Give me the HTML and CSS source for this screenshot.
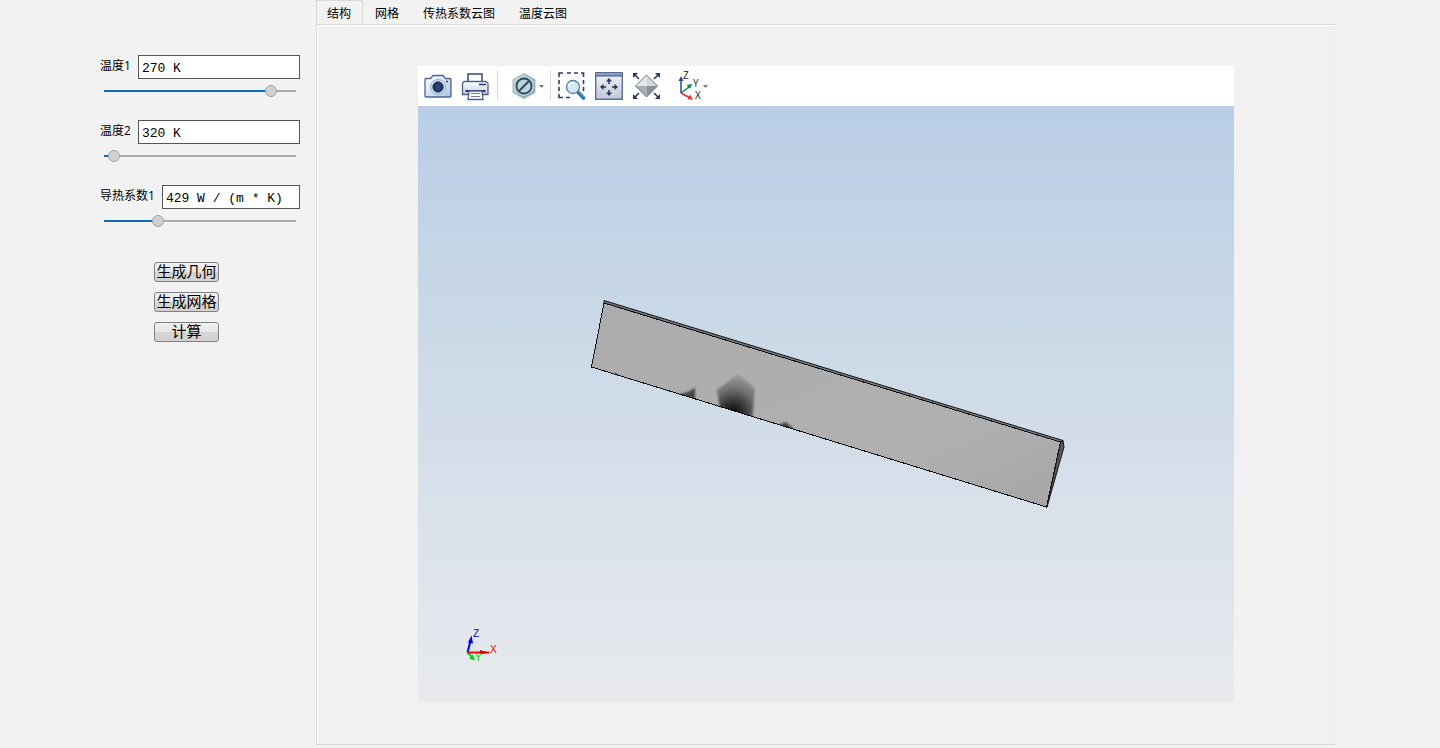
FILE: index.html
```html
<!DOCTYPE html>
<html lang="zh-CN">
<head>
<meta charset="utf-8">
<title>结构</title>
<link rel="stylesheet" href="styles.css">
</head>
<body>
<div class="app">
  <aside class="sidebar">
    <div class="param">
      <div class="param-row"><label for="t1">温度1</label><input class="field" id="t1" type="text" value="270 K"></div>
      <input class="slider" type="range" aria-label="温度1" min="0" max="180" value="161" style="--fill:87%">
    </div>
    <div class="param">
      <div class="param-row"><label for="t2">温度2</label><input class="field" id="t2" type="text" value="320 K"></div>
      <input class="slider" type="range" aria-label="温度2" min="0" max="180" value="4" style="--fill:5%">
    </div>
    <div class="param">
      <div class="param-row"><label for="k1">导热系数1</label><input class="field" id="k1" type="text" value="429 W / (m * K)"></div>
      <input class="slider" type="range" aria-label="导热系数1" min="0" max="180" value="48" style="--fill:28%">
    </div>
    <div class="actions">
      <button class="action" type="button">生成几何</button>
      <button class="action" type="button">生成网格</button>
      <button class="action" type="button">计算</button>
    </div>
  </aside>

  <main class="main">
    <div class="tabs" role="tablist">
      <button class="tab tab-active" type="button" role="tab" aria-selected="true">结构</button>
      <button class="tab" type="button" role="tab" aria-selected="false">网格</button>
      <button class="tab" type="button" role="tab" aria-selected="false">传热系数云图</button>
      <button class="tab" type="button" role="tab" aria-selected="false">温度云图</button>
    </div>
    <section class="panel">
      <div class="viewer">
        <div class="toolbar">
          <button class="tool" type="button" aria-label="截图">
            <svg width="29" height="30" viewBox="0 0 29 30">
              <defs><linearGradient id="cam" x1="0" y1="0" x2="1" y2="1"><stop offset="0" stop-color="#fff"/><stop offset="1" stop-color="#a9c6e4"/></linearGradient>
              <radialGradient id="lens"><stop offset="0" stop-color="#375180"/><stop offset="1" stop-color="#152a5c"/></radialGradient></defs>
              <path d="M1.500 7.500h5l2.500-3h10l2.500 3H26q1 0 1 1V25q0 1-1 1H2q-1 0-1-1V8.500z" fill="url(#cam)" stroke="#4a6494" stroke-width="1.300"/>
              <circle cx="14" cy="16" r="7.500" fill="#d3e0ef" stroke="#8aa1c0" stroke-width=".8"/>
              <circle cx="14" cy="16" r="5.200" fill="url(#lens)" stroke="#25406f"/>
              <circle cx="23" cy="10.500" r="1" fill="#263c6b"/>
            </svg>
          </button>
          <button class="tool" type="button" aria-label="打印">
            <svg width="29" height="30" viewBox="0 0 29 30">
              <defs><linearGradient id="prn" x1="0" y1="0" x2="0" y2="1"><stop offset="0" stop-color="#fff"/><stop offset="1" stop-color="#c3ccdc"/></linearGradient></defs>
              <path d="M7 11V3h14v8" fill="#fff" stroke="#344a77" stroke-width="1.500"/>
              <path d="M3 10.500h22l2 2V23.500H1.500V12.500z" fill="url(#prn)" stroke="#4d618a" stroke-width="1.300"/>
              <path d="M18 13.500h7" stroke="#24375f" stroke-width="1.500"/>
              <path d="M4.500 20h20" stroke="#24375f" stroke-width="2"/>
              <path d="M8 20h13l1 8.500H7z" fill="#fff" stroke="#4d618a" stroke-width="1.300"/>
              <path d="M10 22.500h9M10 25.500h9" stroke="#758198"/>
            </svg>
          </button>
          <span class="separator"></span>
          <button class="tool tool-hex" type="button" aria-label="渲染选项">
            <svg width="35" height="30" viewBox="0 0 35 30">
              <defs><linearGradient id="hex" x1="0" y1="0" x2="1" y2="1"><stop offset="0" stop-color="#c4dedd"/><stop offset="1" stop-color="#7796a2"/></linearGradient></defs>
              <path d="M12 2.500l11 6v13l-11 6-11-6v-13z" fill="url(#hex)" stroke="#a3b9bf"/>
              <path d="M12 5l9 5v10l-9 5-9-5V10z" fill="#a3c1c6" stroke="#d4e4e5" stroke-width=".8"/>
              <circle cx="12" cy="15" r="7.500" fill="#bdd4dc" stroke="#2b4a61" stroke-width="1.800"/>
              <path d="M7 20L17.300 9.700" stroke="#2b4a61" stroke-width="2"/>
              <path d="M27 14h5l-2.500 3z" fill="#777"/>
            </svg>
          </button>
          <span class="separator"></span>
          <button class="tool" type="button" aria-label="框选缩放">
            <svg width="29" height="30" viewBox="0 0 29 30">
              <path d="M1 6V2h4M9 2h4M16 2h4M23 2h2.500v4M25.500 9v4M25.500 16v4M1 9v4M1 16v4M1 23v3.500h4M8 26.500h4" fill="none" stroke="#2b3d6c" stroke-width="1.600"/>
              <path d="M19 20l6.500 7" stroke="#1f6fae" stroke-width="3.500" stroke-linecap="round"/>
              <path d="M19.500 19.500l6 6.500" stroke="#68b4df" stroke-width="1"/>
              <circle cx="15" cy="16" r="6.500" fill="#d3e7f6" stroke="#557e9f" stroke-width="1.300"/>
              <path d="M11 15q1.500-4 5-3.500" fill="none" stroke="#fff" stroke-width="1.500"/>
            </svg>
          </button>
          <button class="tool" type="button" aria-label="适合窗口">
            <svg width="29" height="30" viewBox="0 0 29 30">
              <defs><linearGradient id="fit" x1="0" y1="0" x2="0" y2="1"><stop offset="0" stop-color="#f1f4f9"/><stop offset="1" stop-color="#bfc8d8"/></linearGradient></defs>
              <path d="M.7 1.700h26.600v26.600H.7z" fill="url(#fit)" stroke="#5b6e94" stroke-width="1.400"/>
              <path d="M1 2h26v3H1z" fill="#8a9dbf"/><path d="M0 5h28" stroke="#3f5582"/>
              <path d="M14 9v4M14 19v4M7 16h4M17 16h4" stroke="#22345f" stroke-width="1.500"/>
              <path d="M14 7l3 3.500h-6zM14 25l3-3.500h-6zM5 16l3.500-3v6zM23 16l-3.500-3v6z" fill="#22345f"/>
            </svg>
          </button>
          <button class="tool" type="button" aria-label="全部显示">
            <svg width="29" height="30" viewBox="0 0 29 30">
              <path d="M14.500 4v11h-11z" fill="#e5e7ea"/><path d="M14.500 4v11h11z" fill="#d3d6da"/><path d="M3.500 15h11v11z" fill="#a8aeb6"/><path d="M14.500 15h11l-11 11z" fill="#878f99"/>
              <path d="M14.500 4l11 11-11 11-11-11z" fill="none" stroke="#697587"/>
              <path d="M2 3l5 5M27 3l-5 5M2 27l5-5M27 27l-5-5" stroke="#263b68" stroke-width="1.600"/>
              <path d="M1 2h5L1 7zM28 2h-5l5 5zM1 28h5l-5-5zM28 28h-5l5-5z" fill="#263b68"/>
            </svg>
          </button>
          <button class="tool tool-axes" type="button" aria-label="视图方向">
            <svg width="32" height="30" viewBox="0 0 32 30">
              <path d="M3 22V8" stroke="#2649a0" stroke-width="1.500"/><path d="M.5 10L3 5l2.500 5z" fill="#2649a0"/>
              <path d="M3 22l8-6" stroke="#148446" stroke-width="1.500"/><path d="M14 13l-2 5-3.500-4z" fill="#148446"/>
              <path d="M3 22l9 5" stroke="#e83030" stroke-width="1.500"/><path d="M15 28.500h-5.500l2.500-5z" fill="#e83030"/>
              <text class="axis-label" x="5" y="8">Z</text><text class="axis-label" x="15" y="16">Y</text><text class="axis-label" x="17" y="28">X</text>
              <path d="M25 14h5l-2.500 3z" fill="#777"/>
            </svg>
          </button>
        </div>
        <svg class="scene" viewBox="0 0 816 596" role="img" aria-label="几何模型">
          <defs>
            <linearGradient id="face" x1="0" y1="0" x2="1" y2="1"><stop offset="0" stop-color="#acacac"/><stop offset=".7" stop-color="#b0b0b0"/><stop offset="1" stop-color="#a6a6a6"/></linearGradient>
            <radialGradient id="shade" gradientUnits="userSpaceOnUse" cx="315" cy="307" r="41"><stop offset="0" stop-color="#080808"/><stop offset=".25" stop-color="#303030"/><stop offset=".6" stop-color="#727272"/><stop offset="1" stop-color="#a6a6a6"/></radialGradient>
            <filter id="soft" x="-20%" y="-20%" width="140%" height="140%"><feGaussianBlur stdDeviation="1"/></filter>
            <clipPath id="plate"><path d="M186 196L643 335.500 628.500 401 173.500 261z"/></clipPath>
          </defs>
          <path d="M186 194.500L645 334.500 643 337 186 197z" fill="#777b80" stroke="#161616" stroke-width="1"/>
          <path d="M642.500 336L645 334.500 646 341 629 401z" fill="#55595c" stroke="#161616" stroke-width="1"/>
          <path d="M186 197L642.500 336 628.500 401 173.500 261z" fill="url(#face)"/>
          <g clip-path="url(#plate)">
            <path d="M320 268L299 284l3 20 11 8 21 4 3-34z" fill="url(#shade)" filter="url(#soft)"/>
            <path d="M277 282l-7 4-8 2 15 8z" fill="#444" filter="url(#soft)"/>
            <path d="M368 316l-8 3 20 8z" fill="#444" filter="url(#soft)"/>
            <path d="M197 266l7 6-7-1z" fill="#555"/>
          </g>
          <path d="M186 197L642.500 336 628.500 401 173.500 261z" fill="none" stroke="#111" stroke-width="1" shape-rendering="crispEdges"/>
          <path d="M49.500 546.500L53 533" stroke="#0000f0" stroke-width="2"/><path d="M50 536.500l3.500-7 1.500 8z" fill="#0000f0"/>
          <path d="M49.500 546.500l5 5" stroke="#00d800" stroke-width="2"/><path d="M57 554.500l-6-2 4-4z" fill="#00d800"/>
          <path d="M49.500 546.500H71" stroke="#f00000" stroke-width="2"/><path d="M62 544l8 2.500-8 2z" fill="#d00000"/>
          <text class="triad" x="55" y="531" fill="#0000f0">Z</text>
          <text class="triad" x="57" y="555" fill="#00d800">Y</text>
          <text class="triad" x="72" y="547" fill="#f00000">X</text>
        </svg>
      </div>
    </section>
  </main>
</div>
</body>
</html>
```
FILE: styles.css
```css
* {
  box-sizing: border-box;
}

body {
  margin: 0;
  background: #f2f2f2;
  color: #000;
  font-family: "Noto Sans CJK SC", sans-serif;
  font-size: 12px;
}

.app {
  display: grid;
  grid-template-columns: 316px 1fr 104px;
  min-height: 100vh;
}

.sidebar {
  padding: 55px 16px 0 100px;
}

.param {
  height: 65px;
}

.param-row {
  display: flex;
  align-items: flex-start;
  gap: 7px;
  height: 24px;
}

.param-row label {
  font-family: "Open Sans", "Noto Sans CJK SC", sans-serif;
  line-height: 22px;
  white-space: nowrap;
}

.field {
  flex: 1;
  min-width: 0;
  height: 24px;
  padding: 2px 3px 0;
  border: 1px solid #555459;
  border-radius: 0;
  background: #fff;
  color: #000;
  font-family: "Liberation Mono", monospace;
  font-size: 13px;
}

.slider {
  display: block;
  width: calc(100% - 8px);
  height: 12px;
  margin: 6px 4px 0;
  appearance: none;
  background: linear-gradient(to right, #0f6cbd var(--fill), #ababab var(--fill)) center / 100% 2px no-repeat;
}

.slider::-webkit-slider-thumb {
  width: 12px;
  height: 12px;
  appearance: none;
  border: 1px solid #a3a3a3;
  border-radius: 50%;
  background: #d1d1d1;
}

.actions {
  display: flex;
  flex-direction: column;
  align-items: center;
  gap: 10px;
  padding: 12px 27px 0 0;
}

.action {
  width: 65px;
  height: 20px;
  padding: 0 0 2px;
  border: 1px solid #808080;
  border-radius: 3px;
  background: linear-gradient(#f0f0f0, #e6e6e6 50%, #d5d5d5 50%, #d2d2d2);
  color: #000;
  font-family: "Noto Sans CJK SC", sans-serif;
  font-size: 15px;
  line-height: 16px;
  white-space: nowrap;
}

.main {
  display: flex;
  flex-direction: column;
  padding-bottom: 3px;
}

.tabs {
  display: flex;
  height: 24px;
}

.tab {
  padding: 2px 12px 0;
  border: 0;
  background: transparent;
  color: #000;
  font-family: inherit;
  font-size: 12px;
  line-height: 20px;
}

.tab-active {
  padding: 1px 11px 0 10px;
  border: 1px solid #d9d9d9;
  border-bottom: 0;
}

.panel {
  flex: 1;
  padding: 41px calc(10% - 1px);
  border: 1px solid #d9d9d9;
  border-right-color: #eee;
  box-shadow: inset 1px 1px #fff;
  background: #f1f1f1;
}

.viewer {
  background: linear-gradient(#b9cde6, #c5d6e6 25%, #d0dce8 50%, #dde3ec 75%, #e8eaed);
}

.toolbar {
  display: flex;
  align-items: center;
  height: 40px;
  padding-left: 2px;
  background: #fff;
}

.tool {
  width: 37px;
  height: 40px;
  padding: 0 4px;
  border: 0;
  background: transparent;
}

.tool svg {
  display: block;
  overflow: visible;
}

.tool-hex {
  width: 46px;
  padding: 0 0 0 11px;
}

.tool-axes {
  width: 55px;
  padding: 0 0 0 13px;
}

.separator {
  width: 1px;
  height: 30px;
  margin: 0 3px;
  background: #d8d8d8;
}

.axis-label {
  font: 10px "Open Sans", sans-serif;
  fill: #222;
}

.scene {
  display: block;
  width: 100%;
  height: auto;
  background: linear-gradient(#b9cde6, #c5d6e6 25%, #d0dce8 50%, #dde3ec 75%, #e8eaed);
}

.triad {
  font: 10px "Liberation Sans", sans-serif;
}
```
